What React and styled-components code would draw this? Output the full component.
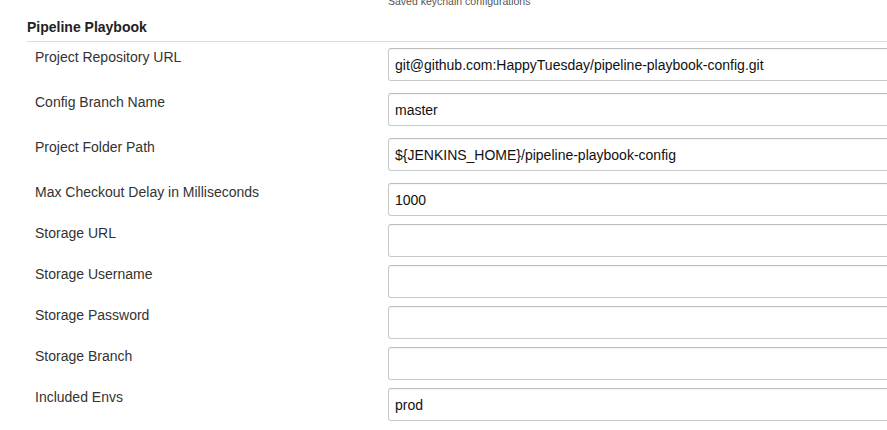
import React from "react";
import styled, { createGlobalStyle } from "styled-components";

const GlobalStyle = createGlobalStyle`
  body {
    margin: 0;
    background: #fff;
    overflow: hidden;
    font-family: "Liberation Sans", Arial, Helvetica, sans-serif;
  }
`;

const Page = styled.div`
  padding-left: 27px;
  width: 900px;
`;

const TopNote = styled.div`
  margin-left: 361px;
  margin-top: -4px;
  font-size: 10.5px;
  line-height: 11px;
  color: #555;
`;

const SectionHeader = styled.div`
  margin-top: 12px;
  padding-bottom: 6px;
  border-bottom: 1px solid #dcdcdc;
  font-size: 14px;
  font-weight: bold;
  line-height: 16px;
  color: #222;
`;

const Row = styled.div`
  display: grid;
  grid-template-columns: 361px 1fr;
  padding: 6px 0 2px;
  margin-bottom: ${props => (props.spaced ? "4px" : "0")};
`;

const Label = styled.div`
  padding-left: 8px;
  padding-top: 1px;
  font-size: 14px;
  line-height: 16px;
  color: #333;
`;

const Field = styled.input`
  box-sizing: border-box;
  width: 520px;
  height: 33px;
  margin: 0;
  padding: 0 6px;
  border: 1px solid #c8c8c8;
  border-top-color: #bdbdbd;
  border-radius: 3px;
  box-shadow: inset 0 1px 1px rgba(0, 0, 0, 0.04);
  font-family: "Liberation Sans", Arial, Helvetica, sans-serif;
  font-size: 14px;
  color: #111;
  background: #fff;
  outline: none;
`;

const fields = [
  { label: "Project Repository URL", value: "git@github.com:HappyTuesday/pipeline-playbook-config.git", spaced: true },
  { label: "Config Branch Name", value: "master", spaced: true },
  { label: "Project Folder Path", value: "${JENKINS_HOME}/pipeline-playbook-config", spaced: true },
  { label: "Max Checkout Delay in Milliseconds", value: "1000" },
  { label: "Storage URL", value: "" },
  { label: "Storage Username", value: "" },
  { label: "Storage Password", value: "" },
  { label: "Storage Branch", value: "" },
  { label: "Included Envs", value: "prod" }
];

function App() {
  return (
    <>
      <GlobalStyle />
      <Page>
        <TopNote>Saved keychain configurations</TopNote>
        <SectionHeader>Pipeline Playbook</SectionHeader>
        {fields.map(field => (
          <Row key={field.label} spaced={field.spaced}>
            <Label>{field.label}</Label>
            <Field type="text" defaultValue={field.value} />
          </Row>
        ))}
      </Page>
    </>
  );
}

export default App;
